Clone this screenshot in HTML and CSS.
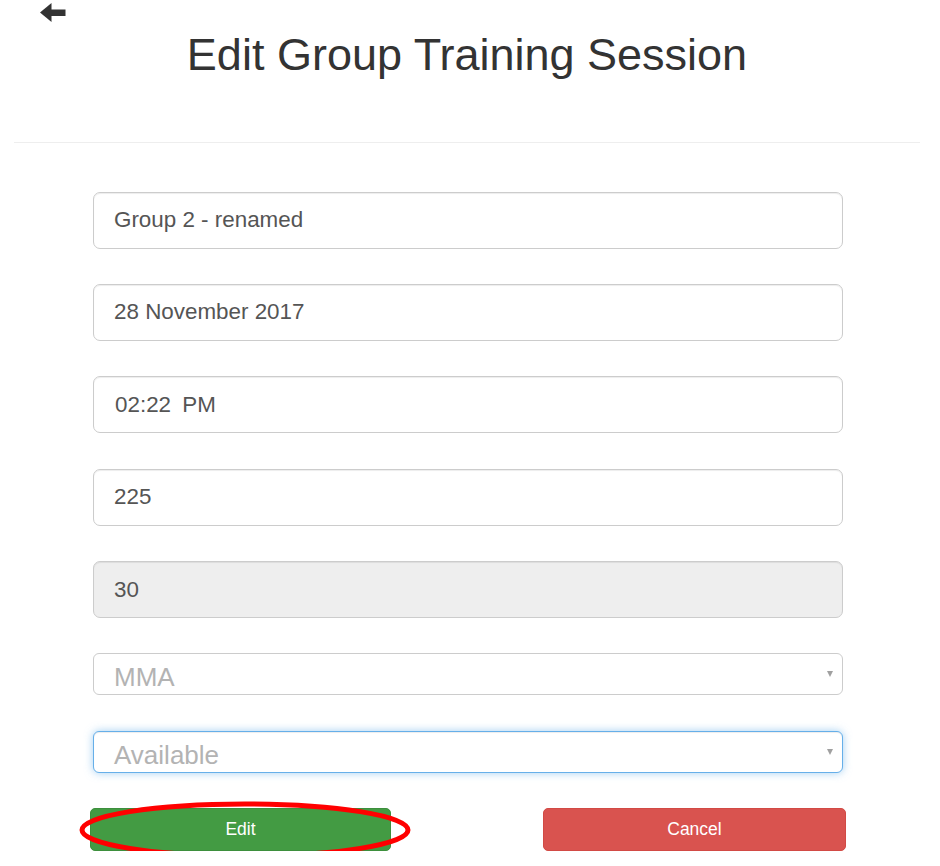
FILE: index.html
```html
<!DOCTYPE html>
<html>
<head>
<meta charset="utf-8">
<link rel="stylesheet" href="styles.css">
</head>
<body>
<div class="page">
  <header class="header">
    <a class="back" href="#" aria-label="Back">
      <svg width="26" height="20" viewBox="0 0 26 20"><polygon points="0,9.5 11.5,0 11.5,19" fill="#333"/><rect x="11" y="6.5" width="14.5" height="6.5" fill="#333"/></svg>
    </a>
    <h1 class="title">Edit Group Training Session</h1>
  </header>
  <hr class="rule">
  <form class="form">
    <input class="field" type="text" value="Group 2 - renamed">
    <input class="field" type="text" value="28 November 2017">
    <input class="field time" type="text" value="02:22 PM">
    <input class="field" type="text" value="225">
    <input class="field disabled" type="text" value="30" disabled>
    <div class="select"><span class="select-text">MMA</span><span class="caret"></span></div>
    <div class="select focused"><span class="select-text">Available</span><span class="caret"></span></div>
    <div class="actions">
      <div class="btn-wrap">
        <button type="button" class="btn btn-success">Edit</button>
        <svg class="annot" width="334" height="60" viewBox="0 0 334 60"><ellipse cx="167" cy="30" rx="163" ry="26" fill="none" stroke="#ff0000" stroke-width="5"/></svg>
      </div>
      <button type="button" class="btn btn-danger">Cancel</button>
    </div>
  </form>
</div>
</body>
</html>
```
FILE: styles.css
```css
html, body {
  margin: 0;
  padding: 0;
  background: #fff;
}
body {
  font-family: "Liberation Sans", Arial, sans-serif;
  color: #333;
}
.page {
  margin: 0 20px 0 14px;
}
.header {
  position: relative;
  padding-top: 30px;
}
.back {
  position: absolute;
  left: 26px;
  top: 3px;
  display: block;
  line-height: 0;
}
.title {
  margin: 0;
  text-align: center;
  font-size: 45px;
  font-weight: 400;
  line-height: 49.5px;
  color: #333;
}
.rule {
  margin: 62px 0 0;
  border: 0;
  border-top: 1px solid #eee;
  height: 0;
}
.form {
  margin: 49px 0 0 79px;
  width: 750px;
  display: flex;
  flex-direction: column;
  gap: 35.4px;
}
.field {
  box-sizing: border-box;
  display: block;
  width: 100%;
  height: 57px;
  margin: 0;
  padding: 0 20px;
  border: 1px solid #ccc;
  border-radius: 7px;
  background: #fff;
  font-family: "Liberation Sans", Arial, sans-serif;
  font-size: 22.4px;
  color: #555;
  box-shadow: inset 0 1px 1px rgba(0,0,0,.075);
  outline: none;
}
.field.time {
  padding-left: 21px;
  word-spacing: 5px;
}
.field.disabled {
  background: #eee;
  color: #555;
  -webkit-text-fill-color: #555;
  opacity: 1;
}
.select {
  box-sizing: border-box;
  position: relative;
  height: 42px;
  padding: 8px 20px 0;
  border: 1px solid #ccc;
  border-radius: 6px;
  background: #fff;
  overflow: hidden;
  font-size: 26px;
  line-height: 30px;
  color: #b3b3b3;
}
.select.focused {
  border-color: #66afe9;
  box-shadow: inset 0 1px 1px rgba(0,0,0,.075), 0 0 8px rgba(102,175,233,.6);
  overflow: visible;
}
.select-text {
  display: block;
  white-space: nowrap;
}
.caret {
  position: absolute;
  right: 9px;
  top: 17px;
  width: 0;
  height: 0;
  border-left: 3px solid transparent;
  border-right: 3px solid transparent;
  border-top: 6px solid #a0a0a0;
}
.actions {
  display: flex;
  justify-content: space-between;
  margin-left: -3px;
  width: 756px;
}
.btn-wrap {
  position: relative;
}
.btn {
  box-sizing: border-box;
  display: block;
  height: 42.5px;
  border: 1px solid transparent;
  border-radius: 5px;
  font-family: "Liberation Sans", Arial, sans-serif;
  font-size: 17.5px;
  color: #fff;
  cursor: pointer;
}
.btn-success {
  width: 301px;
  background: #439b43;
  border-color: #3d8f3d;
}
.btn-danger {
  width: 303px;
  background: #d9534f;
  border-color: #d24a45;
}
.annot {
  position: absolute;
  left: -12px;
  top: -8px;
  pointer-events: none;
}
```
